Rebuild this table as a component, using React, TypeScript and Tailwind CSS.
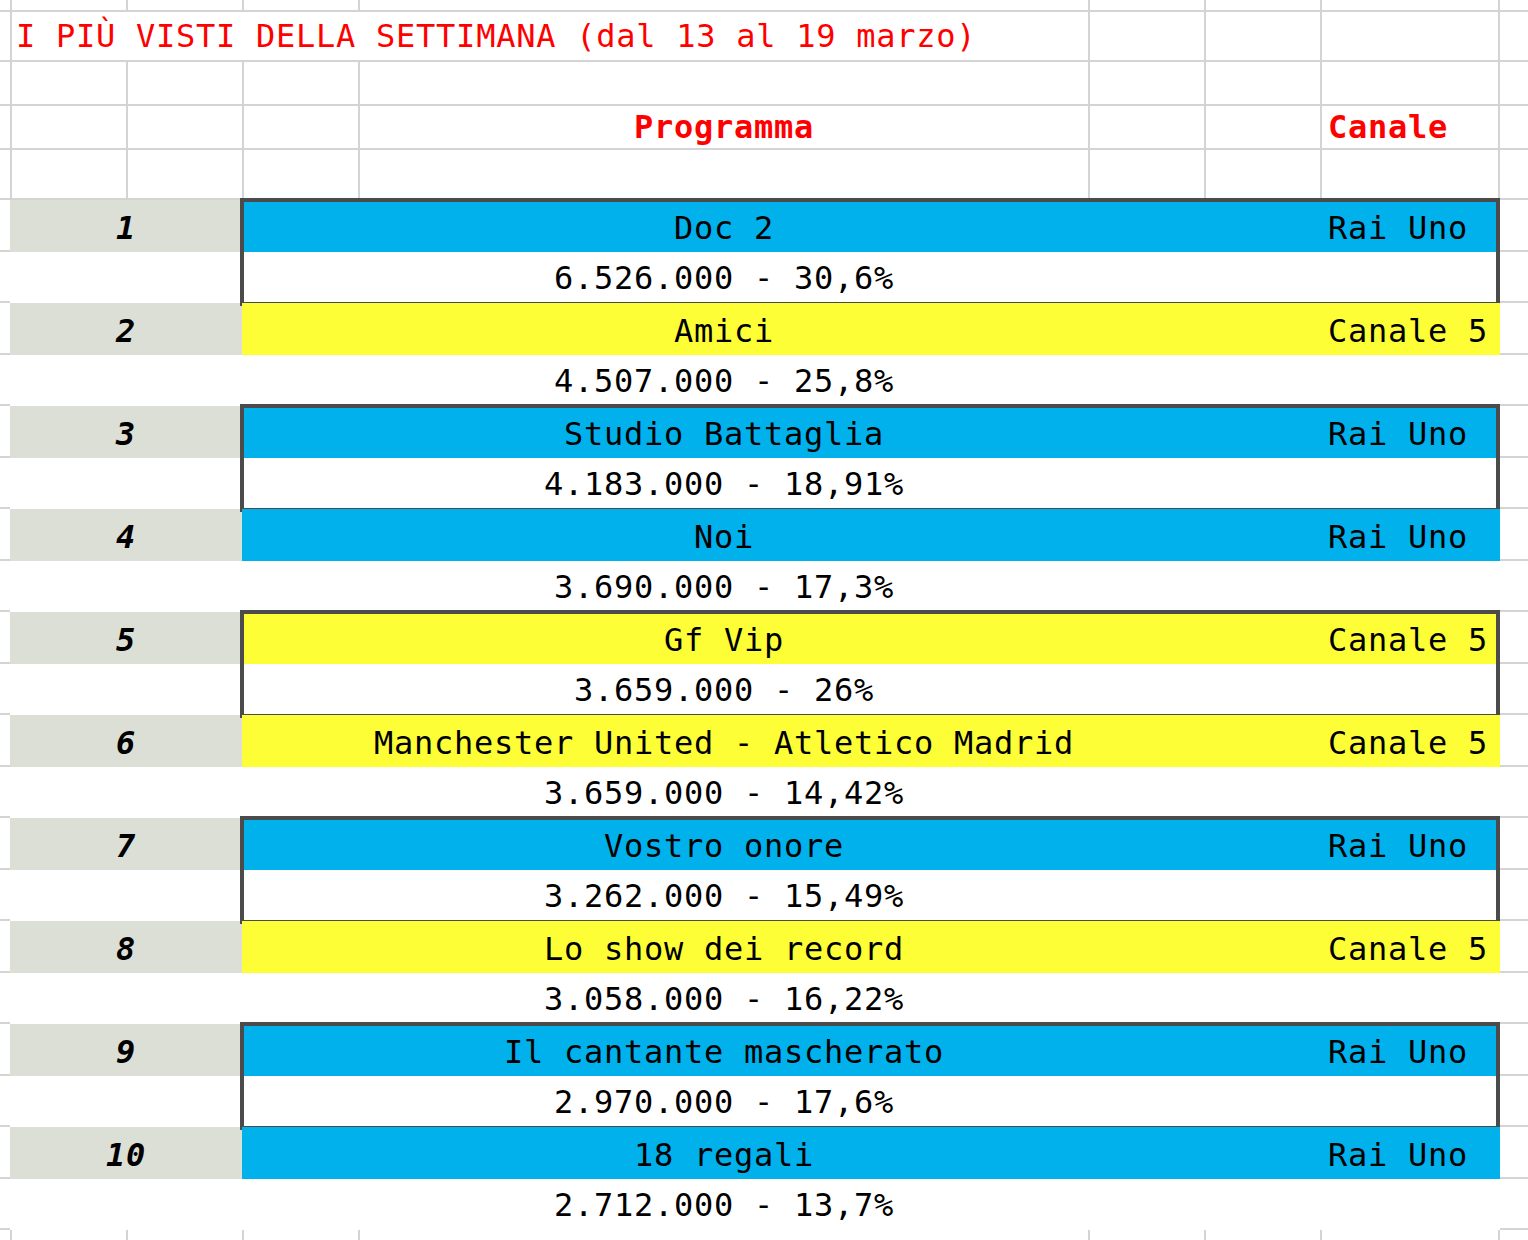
import React from "react";

type Row = {
  n: number;
  prog: string;
  ch: string;
  stat: string;
  color: "blue" | "yellow";
  boxed: boolean;
};

const rows: Row[] = [
  { n: 1, prog: "Doc 2", ch: "Rai Uno", stat: "6.526.000 - 30,6%", color: "blue", boxed: true },
  { n: 2, prog: "Amici", ch: "Canale 5", stat: "4.507.000 - 25,8%", color: "yellow", boxed: false },
  { n: 3, prog: "Studio Battaglia", ch: "Rai Uno", stat: "4.183.000 - 18,91%", color: "blue", boxed: true },
  { n: 4, prog: "Noi", ch: "Rai Uno", stat: "3.690.000 - 17,3%", color: "blue", boxed: false },
  { n: 5, prog: "Gf Vip", ch: "Canale 5", stat: "3.659.000 - 26%", color: "yellow", boxed: true },
  { n: 6, prog: "Manchester United - Atletico Madrid", ch: "Canale 5", stat: "3.659.000 - 14,42%", color: "yellow", boxed: false },
  { n: 7, prog: "Vostro onore", ch: "Rai Uno", stat: "3.262.000 - 15,49%", color: "blue", boxed: true },
  { n: 8, prog: "Lo show dei record", ch: "Canale 5", stat: "3.058.000 - 16,22%", color: "yellow", boxed: false },
  { n: 9, prog: "Il cantante mascherato", ch: "Rai Uno", stat: "2.970.000 - 17,6%", color: "blue", boxed: true },
  { n: 10, prog: "18 regali", ch: "Rai Uno", stat: "2.712.000 - 13,7%", color: "blue", boxed: false },
];

const line = "border-[#d4d4d4]";

function GridRow({ h, children }: { h: string; children?: React.ReactNode }) {
  return <div className={`flex ${h}`}>{children}</div>;
}

function EmptyCells({ last = true }: { last?: boolean }) {
  return (
    <>
      <div className={`w-[116px] shrink-0 border-r-2 border-b-2 ${line}`} />
      <div className={`w-[116px] shrink-0 border-r-2 border-b-2 ${line}`} />
      {last && <div className={`w-[178px] shrink-0 border-r-2 border-b-2 ${line}`} />}
    </>
  );
}

function PlainRow({ h }: { h: string }) {
  return (
    <GridRow h={h}>
      <div className={`w-[12px] shrink-0 border-r-2 border-b-2 ${line}`} />
      <div className={`w-[116px] shrink-0 border-r-2 border-b-2 ${line}`} />
      <div className={`w-[116px] shrink-0 border-r-2 border-b-2 ${line}`} />
      <div className={`w-[116px] shrink-0 border-r-2 border-b-2 ${line}`} />
      <div className={`w-[730px] shrink-0 border-r-2 border-b-2 ${line}`} />
      <EmptyCells />
      <div className={`flex-1 border-b-2 ${line}`} />
    </GridRow>
  );
}

function Pair({ r }: { r: Row }) {
  const bg = r.color === "blue" ? "bg-[#00b1ec]" : "bg-[#fefe37]";
  return (
    <div className="flex">
      <div className="w-[10px] shrink-0 flex flex-col">
        <div className={`h-[52px] border-b-2 ${line}`} />
        <div className={`h-[51px] border-b-2 ${line}`} />
      </div>
      <div className="w-[232px] shrink-0 flex flex-col">
        <div className="h-[52px] bg-[#dcdfd6] flex items-center justify-center pt-[4px] font-bold italic">
          {r.n}
        </div>
        <div className="h-[51px] bg-white" />
      </div>
      <div className="w-[1258px] shrink-0 relative flex flex-col">
        <div className={`h-[52px] ${bg} flex items-center pt-[4px]`}>
          <div className="w-[117px] shrink-0" />
          <div className="w-[730px] shrink-0 text-center whitespace-nowrap">{r.prog}</div>
          <div className="w-[232px] shrink-0" />
          <div className="flex-1 pl-[7px] whitespace-nowrap">{r.ch}</div>
        </div>
        <div className="h-[51px] bg-white flex items-center pt-[1px]">
          <div className="w-[117px] shrink-0" />
          <div className="w-[730px] shrink-0 text-center whitespace-nowrap">{r.stat}</div>
        </div>
        {r.boxed && (
          <div className="absolute -top-[2px] -bottom-[3px] -left-[2px] right-0 border-4 border-[#4b4b4b] pointer-events-none" />
        )}
      </div>
      <div className="flex-1 flex flex-col">
        <div className={`h-[52px] border-b-2 ${line}`} />
        <div className={`h-[51px] border-b-2 ${line}`} />
      </div>
    </div>
  );
}

export default function App() {
  return (
    <div
      className="w-[1528px] h-[1240px] bg-white overflow-hidden text-[32px] tracking-[0.74px] leading-none text-black"
      style={{ fontFamily: '"DejaVu Sans Mono", "Liberation Mono", monospace' }}
    >
      <PlainRow h="h-[12px]" />
      {/* Title row */}
      <GridRow h="h-[50px]">
        <div className={`w-[12px] shrink-0 border-r-2 border-b-2 ${line}`} />
        <div className={`w-[1078px] shrink-0 border-r-2 border-b-2 ${line} flex items-center pl-[4px] text-[#ff0000] whitespace-nowrap`}>
          I PIÙ VISTI DELLA SETTIMANA (dal 13 al 19 marzo)
        </div>
        <EmptyCells />
        <div className={`flex-1 border-b-2 ${line}`} />
      </GridRow>
      <PlainRow h="h-[44px]" />
      {/* Header row */}
      <GridRow h="h-[44px]">
        <div className={`w-[12px] shrink-0 border-r-2 border-b-2 ${line}`} />
        <div className={`w-[116px] shrink-0 border-r-2 border-b-2 ${line}`} />
        <div className={`w-[116px] shrink-0 border-r-2 border-b-2 ${line}`} />
        <div className={`w-[116px] shrink-0 border-r-2 border-b-2 ${line}`} />
        <div className={`w-[730px] shrink-0 border-r-2 border-b-2 ${line} flex items-center justify-center text-[#ff0000] font-bold`}>
          Programma
        </div>
        <EmptyCells last={false} />
        <div className={`w-[178px] shrink-0 border-r-2 border-b-2 ${line} flex items-center pl-[6px] text-[#ff0000] font-bold`}>
          Canale
        </div>
        <div className={`flex-1 border-b-2 ${line}`} />
      </GridRow>
      <PlainRow h="h-[50px]" />
      {rows.map((r) => (
        <Pair key={r.n} r={r} />
      ))}
      {/* bottom partial row */}
      <GridRow h="h-[20px]">
        <div className={`w-[12px] shrink-0 border-r-2 ${line}`} />
        <div className={`w-[116px] shrink-0 border-r-2 ${line}`} />
        <div className={`w-[116px] shrink-0 border-r-2 ${line}`} />
        <div className={`w-[116px] shrink-0 border-r-2 ${line}`} />
        <div className={`w-[730px] shrink-0 border-r-2 ${line}`} />
        <div className={`w-[116px] shrink-0 border-r-2 ${line}`} />
        <div className={`w-[116px] shrink-0 border-r-2 ${line}`} />
        <div className={`w-[178px] shrink-0 border-r-2 ${line}`} />
        <div className="flex-1" />
      </GridRow>
    </div>
  );
}
